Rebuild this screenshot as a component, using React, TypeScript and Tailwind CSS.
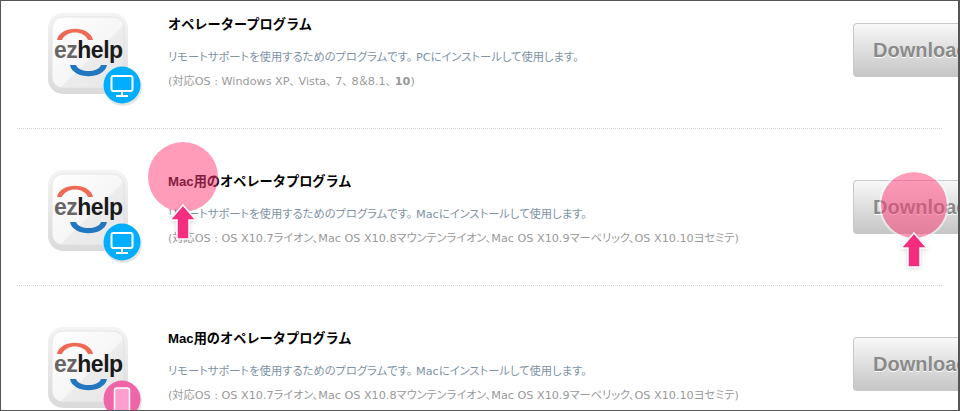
const jpFont = "[font-family:'DejaVu_Sans','Noto_Sans_CJK_JP',sans-serif]";

function EzhelpIcon({ kind, id }: { kind: "pc" | "mobile"; id: string }) {
  return (
    <svg width="96" height="94" viewBox="0 0 96 94" className="shrink-0">
      <defs>
        <linearGradient id={`face-${id}`} x1="0" y1="0" x2="1" y2="1">
          <stop offset="0" stopColor="#ffffff" />
          <stop offset="0.55" stopColor="#f6f6f6" />
          <stop offset="0.56" stopColor="#ececec" />
          <stop offset="1" stopColor="#e6e6e6" />
        </linearGradient>
        <linearGradient id={`rim-${id}`} x1="0" y1="0" x2="0" y2="1">
          <stop offset="0" stopColor="#f4f4f4" />
          <stop offset="1" stopColor="#dadada" />
        </linearGradient>
      </defs>
      <rect x="0" y="0" width="80" height="81" rx="15" fill={`url(#rim-${id})`} />
      <rect x="4" y="4" width="72" height="71" rx="11" fill={`url(#face-${id})`} stroke="#dddddd" strokeWidth="0.75" />
      <path d="M9 27C12 12 42 12 45 27H40C36 17 18 17 14 27Z" fill="#ee6a55" />
      <path d="M22 52C25 67 56 67 59 52H53C50 60 31 60 28 52Z" fill="#2277c0" />
      <text x="6" y="45" fontFamily="'Liberation Sans',sans-serif" fontWeight="700" fontSize="23" letterSpacing="-0.5" fill="#666666">
        ez<tspan fill="#1a1a1a">help</tspan>
      </text>
      <circle cx="75" cy="74" r="19" fill="#000000" opacity="0.1" />
      {kind === "pc" ? (
        <g>
          <circle cx="74" cy="72" r="18.5" fill="#00aeff" />
          <rect x="63.5" y="63" width="21" height="15" rx="2" fill="none" stroke="#ffffff" strokeWidth="2" />
          <path d="M74 78v4M68 83h12" stroke="#ffffff" strokeWidth="2" fill="none" />
        </g>
      ) : (
        <g>
          <circle cx="74" cy="72" r="18.5" fill="#f064a8" />
          <rect x="66.5" y="61" width="15" height="24" rx="2.5" fill="#ff9fcf" stroke="#ffffff" strokeWidth="1.5" />
        </g>
      )}
    </svg>
  );
}

function ProgramRow({ top, kind, id, title, desc, os, last }: { top: string; kind: "pc" | "mobile"; id: string; title: string; desc: string; os: React.ReactNode; last?: boolean }) {
  return (
    <div className={`mx-[16px] flex ${top} ${last ? "" : "border-b border-dotted border-[#d4d4d4]"}`}>
      <div className="ml-[31px] w-[120px]">
        <EzhelpIcon kind={kind} id={id} />
      </div>
      <div className={`flex-1 whitespace-nowrap [font-feature-settings:'palt'] ${jpFont}`}>
        <div className="mt-[2px] font-['Liberation_Sans','Noto_Sans_CJK_JP',sans-serif] text-[13.2px] leading-[20px] font-bold text-black [font-feature-settings:normal]">{title}</div>
        <div className="mt-[13px] text-[11.3px] leading-[20px] text-[#7e92a6]">{desc}</div>
        <div className="mt-[4px] text-[11.2px] leading-[20px] text-[#999999]">{os}</div>
      </div>
      <div className="-mr-[16px] mt-[10px] flex h-[54px] w-[105px] items-center overflow-hidden rounded-l-[4px] border border-r-0 border-[#c8c8c8] bg-gradient-to-b from-[#f8f8f8] to-[#c6c6c6] pl-[19px] font-['Liberation_Sans',sans-serif] text-[20px] font-bold whitespace-nowrap text-[#8a8a8a] [text-shadow:0_1px_0_#ffffff]">
        Download
      </div>
    </div>
  );
}

function Highlight({ cx, cy, ring }: { cx: string; cy: string; ring?: boolean }) {
  return (
    <div className={`pointer-events-none absolute ${cx} ${cy} flex flex-col items-center`}>
      <div className={`h-[70px] w-[70px] rounded-full bg-[#ff3975]/50 bg-clip-padding ${ring ? "border-2 border-white/50" : ""}`} />
      <svg width="30" height="38" viewBox="0 0 30 38" className="-mt-[8px] drop-shadow-sm">
        <path d="M15 1L28 16H21V35H9V16H2Z" fill="#f52d7f" stroke="#ffffff" strokeWidth="1.5" />
      </svg>
    </div>
  );
}

export default function App() {
  const macDesc = "リモートサポートを使用するためのプログラムです。 Macにインストールして使用します。";
  const macOs = "(対応OS : OS X10.7ライオン、Mac OS X10.8マウンテンライオン、Mac OS X10.9マーベリック、OS X10.10ヨセミテ)";
  return (
    <div className="relative h-[411px] w-[960px] overflow-hidden border-t border-r-2 border-b border-l border-[#555555] bg-white">
      <ProgramRow
        top="h-[128px] pt-[12px]"
        kind="pc"
        id="a"
        title="オペレータープログラム"
        desc="リモートサポートを使用するためのプログラムです。 PCにインストールして使用します。"
        os={<>(対応OS : Windows XP、 Vista、 7、 8＆8.1、 <b>10</b>)</>}
      />
      <ProgramRow top="h-[157px] pt-[41px]" kind="pc" id="b" title="Mac用のオペレータプログラム" desc={macDesc} os={macOs} />
      <ProgramRow top="h-[157px] pt-[41px]" kind="mobile" id="c" title="Mac用のオペレータプログラム" desc={macDesc} os={macOs} last />
      <Highlight cx="left-[147px]" cy="top-[141px]" />
      <Highlight cx="left-[878px]" cy="top-[169px]" ring />
    </div>
  );
}
